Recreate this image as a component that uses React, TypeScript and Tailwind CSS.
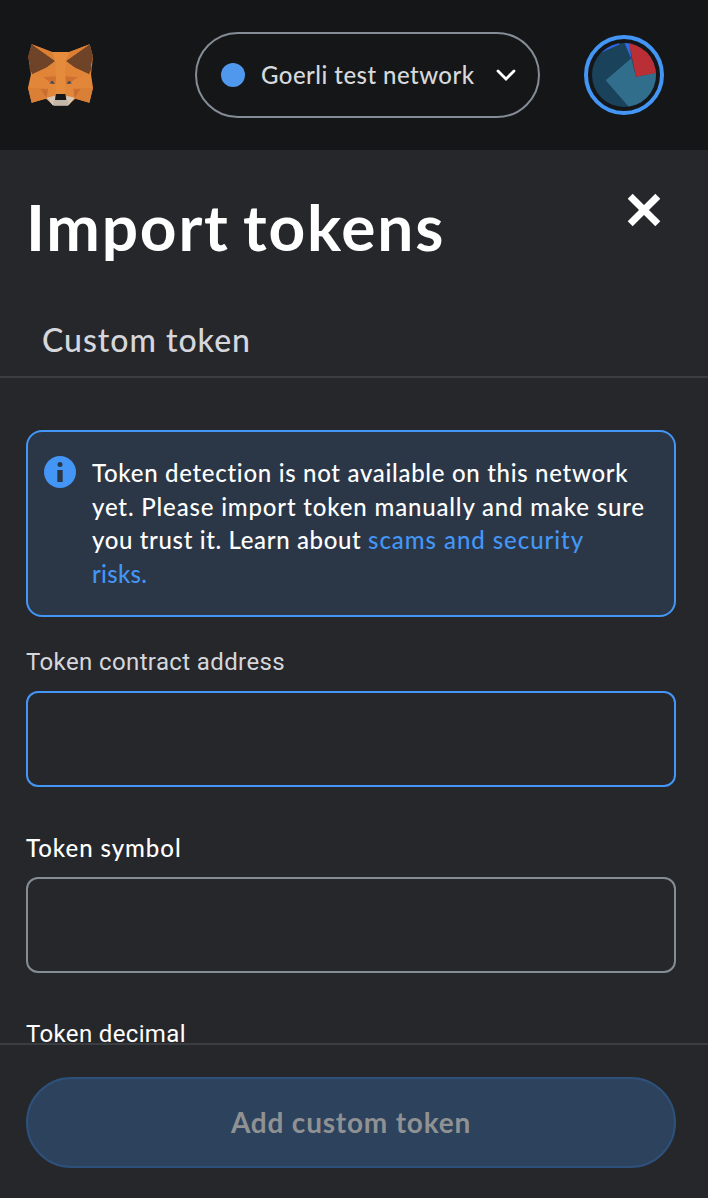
import React from "react";

function FoxLogo() {
  return (
    <svg width="84" height="80" viewBox="0 0 252 240" aria-hidden="true">
      <path d="M35 28 96 51H148L209 28 219 65 213 118 219 158 208 203 166 191 145 210H99L78 191 35 203 24 158 33 118 25 65Z" fill="#e2873a" />
      <path d="M35 28 105 78 79 98 37 118 28 100 30 90 24 65Z" fill="#6f4327" />
      <path d="M209 28 138 78 165 98 207 118 215 100 213 90 219 65Z" fill="#6f4327" />
      <path d="M35 28 96 51 107 78ZM209 28 148 51 137 78Z" fill="#dc7e33" />
      <path d="M96 51H148L137 78 136 178H107L106 78Z" fill="#e48b3c" />
      <path d="M37 118 79 98 105 80 108 126 70 128Z" fill="#e08437" />
      <path d="M207 118 165 98 138 80 136 126 173 128Z" fill="#e08437" />
      <path d="M24 158 70 160 80 190 35 203Z" fill="#d98036" />
      <path d="M219 158 173 160 164 190 208 203Z" fill="#d98036" />
      <path d="M70 127 108 124 106 148 88 140ZM173 127 136 124 138 148 155 140Z" fill="#cf702f" />
      <path d="M62 162 84 161 80 190ZM181 162 160 161 164 190Z" fill="#cb6d2f" />
      <path d="M80 188 104 182 107 194H137L140 182 164 188 146 211H98Z" fill="#d6c6b7" />
      <path d="M99 198 108 194H137L146 198 144 212H101Z" fill="#c4b6a8" />
      <path d="M108 177H136L139 195H105Z" fill="#15171a" />
      <path d="M88 145 97 137 104 147ZM156 145 147 137 140 147Z" fill="#344466" />
    </svg>
  );
}

function Avatar() {
  return (
    <div className="flex size-20 items-center justify-center rounded-full border-4 border-[#4396f5]">
      <svg width="64" height="64" viewBox="66 54 192 192" aria-hidden="true">
        <defs>
          <clipPath id="avatar-circle">
            <circle cx="162" cy="150" r="96" />
          </clipPath>
        </defs>
        <g clipPath="url(#avatar-circle)">
          <path d="M60 50H270V250H60Z" fill="#1b425b" />
          <path d="M96 82 150 58 140 48H90Z" fill="#2f66e5" />
          <path d="M162 50H178L184 102Z" fill="#3269e8" />
          <path d="M107 166 184 100 198 155 262 142V250H180Z" fill="#306e8b" />
          <path d="M176 50H262V143L198 155Z" fill="#ba2e35" />
        </g>
      </svg>
    </div>
  );
}

function Field({ label, labelClass, boxClass }: { label: string; labelClass: string; boxClass: string }) {
  return (
    <div className="h-[186px]">
      <label className={`block h-[46px] text-2xl leading-[34px] ${labelClass}`}>
        <span className="whitespace-nowrap">{label}</span>
        <input className={`mt-[12px] block h-24 w-full rounded-xl border-2 bg-transparent px-4 text-white outline-none ${boxClass}`} />
      </label>
    </div>
  );
}

export default function App() {
  return (
    <div className="flex h-[1198px] w-[708px] flex-col overflow-hidden bg-[#26272b] font-['Lato',sans-serif] text-white">
      <header className="flex h-[150px] shrink-0 items-center bg-[#151618] pl-5">
        <FoxLogo />
        <button className="ml-[91px] flex h-[86px] w-[345px] items-center rounded-full border-2 border-[#848c96] pl-6">
          <span className="size-6 rounded-full bg-[#5098ed]" />
          <span className="ml-4 w-[220px] whitespace-nowrap text-left text-2xl font-medium tracking-[0.45px] text-[#d6d9dc]">
            Goerli test network
          </span>
          <svg className="ml-[14px]" width="22" height="14" viewBox="0 0 22 14" fill="none" aria-hidden="true">
            <path d="M3 3 11 11 19 3" stroke="#fff" strokeWidth="2.8" strokeLinecap="round" strokeLinejoin="miter" />
          </svg>
        </button>
        <div className="ml-11">
          <Avatar />
        </div>
      </header>

      <div className="flex h-[154px] shrink-0 items-start justify-between pl-[26px] pr-[47px]">
        <h1 className="mt-[32px] whitespace-nowrap text-[64px] font-bold leading-[90px] tracking-[1.8px] [word-spacing:-4px]">Import tokens</h1>
        <button aria-label="Close" className="mt-[43px]">
          <svg width="34" height="34" viewBox="0 0 34 34" fill="none" aria-hidden="true">
            <path d="M3.2 3.2 30.8 30.8M30.8 3.2 3.2 30.8" stroke="#fff" strokeWidth="7" />
          </svg>
        </button>
      </div>

      <nav className="h-[74px] shrink-0 border-b-2 border-[#3b3d42] pl-[42px]">
        <span className="block whitespace-nowrap pt-4 text-[32px] font-medium leading-10 tracking-[0.98px] text-[#d6d7dc]">Custom token</span>
      </nav>

      <main className="min-h-0 flex-1 overflow-hidden pl-[26px] pr-8 pt-[52px]">
        <div className="flex h-[187px] w-[650px] rounded-2xl border-2 border-[#4396f5] bg-[#2b3747] pl-4 pt-6">
          <svg className="shrink-0" width="32" height="32" viewBox="0 0 32 32" aria-hidden="true">
            <circle cx="16" cy="16" r="16" fill="#4396f5" />
            <circle cx="16" cy="8.6" r="2.5" fill="#2b3747" />
            <path d="M13.3 14H18.7V26H13.3Z" fill="#2b3747" />
          </svg>
          <p className="ml-4 whitespace-nowrap text-2xl font-medium leading-[33.6px]">
            <span className="block tracking-[0.7px]">Token detection is not available on this network</span>
            <span className="block tracking-[0.83px]">yet. Please import token manually and make sure</span>
            <span className="block tracking-[0.64px]">
              you trust it. Learn about <span className="tracking-[0.95px] text-[#4396f5]">scams and security</span>
            </span>
            <span className="block tracking-[0.3px] text-[#4396f5]">risks.</span>
          </p>
        </div>
        <div className="pt-7">
          <Field label="Token contract address" labelClass="font-['Roboto',sans-serif] tracking-[0.38px] text-[#d6d7dc]" boxClass="border-[#4396f5]" />
          <Field label="Token symbol" labelClass="font-medium tracking-[0.95px]" boxClass="border-[#848c96]" />
          <Field label="Token decimal" labelClass="font-['Roboto',sans-serif] tracking-[0.35px]" boxClass="border-[#848c96]" />
        </div>
      </main>

      <footer className="h-[155px] shrink-0 border-t-2 border-[#3b3d42] px-[26px] pt-8">
        <button disabled className="flex h-[91px] w-[650px] items-center justify-center rounded-full border-2 border-[#2e517c] bg-[#2d425c] pb-[2px] text-[28px] font-bold tracking-[0.8px] text-[#8f9192]">
          <span className="whitespace-nowrap">Add custom token</span>
        </button>
      </footer>
    </div>
  );
}
